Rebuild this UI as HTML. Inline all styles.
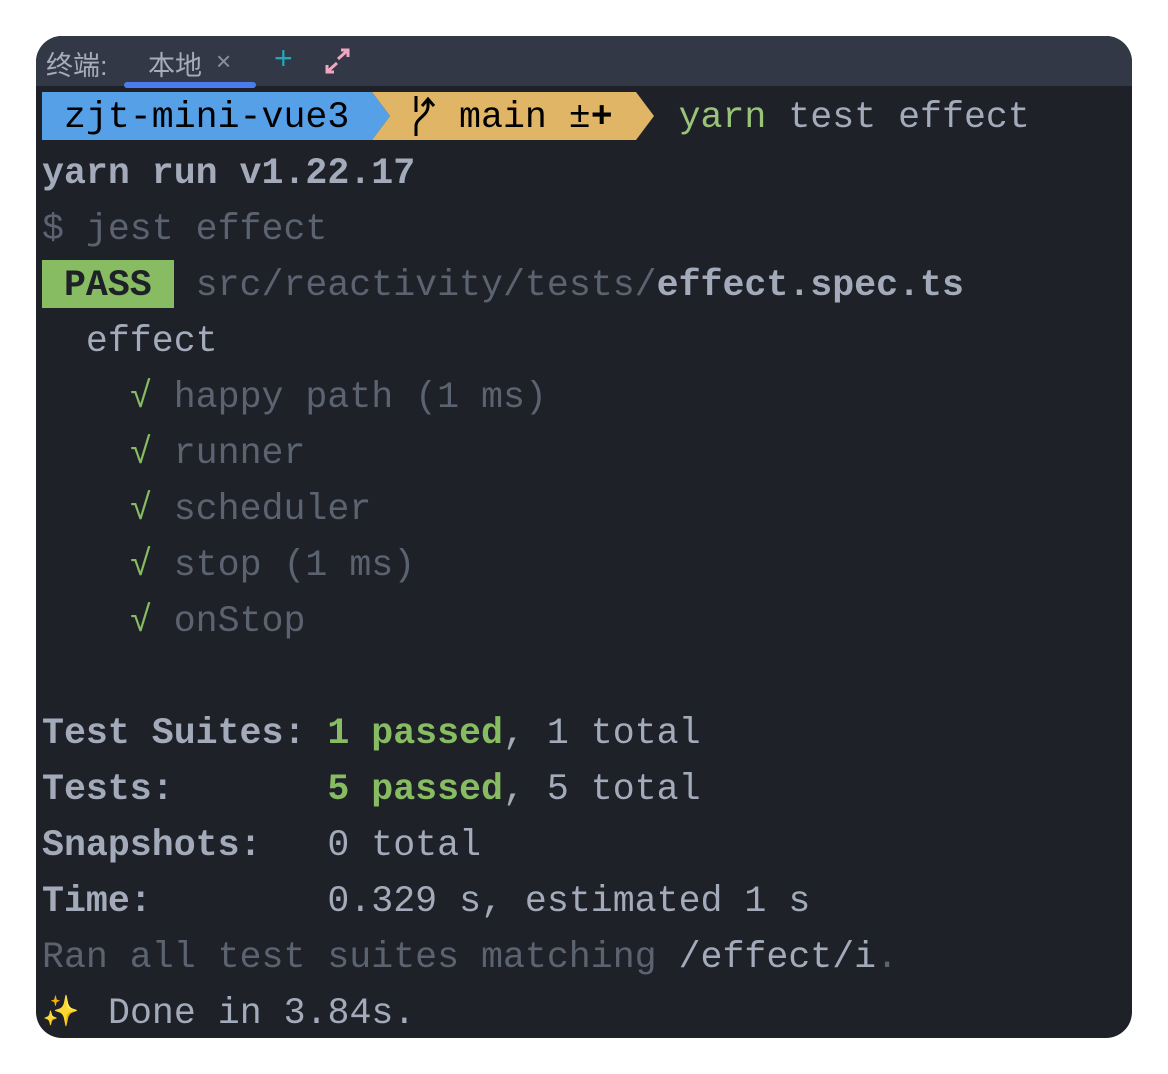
<!DOCTYPE html>
<html><head><meta charset="utf-8"><style>
body{margin:0;background:#fff;width:1168px;height:1074px;position:relative;overflow:hidden}
.win{position:absolute;left:36px;top:36px;width:1096px;height:1002px;border-radius:26px;background:#1f2129;overflow:hidden}
.hdr{position:absolute;left:0;top:0;width:1096px;height:50px;background:#323845}
.hdr span{position:absolute;font-family:"Liberation Sans","Noto Sans CJK SC",sans-serif;font-size:27px;color:#a6acb8;top:8px}
.ul{position:absolute;left:88px;top:46px;width:132px;height:6px;border-radius:3px;background:#4a7cf0}
.l{position:absolute;left:6px;white-space:pre;font-family:"Liberation Mono",monospace;font-size:36.6px;line-height:56px;height:56px;color:#a3abba}
.b{font-weight:bold}
.d{color:#5c6370}
.g{color:#87bc62}
.bar{position:absolute;top:56px;height:48px}
</style></head><body>
<div class="win">
<div class="hdr">
<span style="left:10px">终端:</span>
<span style="left:112px">本地</span>
<span style="left:180px;font-size:26px;top:10px;color:#8a909c">×</span>
<span style="left:238px;color:#22a6b8;font-size:32px;top:4px">+</span>
<svg style="position:absolute;left:288px;top:12px" width="28" height="26" viewBox="0 0 28 26"><g stroke="#f0a6c0" stroke-width="3" fill="none"><path d="M14 11L24 2M17 2H24V9"/><path d="M13 15L3 24M3 17V24H10"/></g></svg>
</div>
<div class="ul"></div>
<svg class="bar" style="left:6px" width="620" height="48"><polygon points="0,0 330,0 348,24 330,48 0,48" fill="#56a0e8"/><polygon points="330,0 594,0 612,24 594,48 330,48 348,24" fill="#e0b566"/>
<g stroke="#000" stroke-width="3" fill="none"><path d="M374 4V20M374 44V34C374 26 386 24 386 14V8M380 14L386 7L392 14"/></g></svg>
<div class="l" style="top:54px;color:#000"> zjt-mini-vue3     main ±<b>+</b>   <span style="color:#98c379">yarn</span><span style="color:#a3abba"> test effect</span></div>
<div class="l b" style="top:110px">yarn run v1.22.17</div>
<div class="l d" style="top:166px">$ jest effect</div>
<div style="position:absolute;left:6px;top:224px;width:132px;height:48px;background:#87bc62"></div>
<div class="l" style="top:222px"><span class="b" style="color:#1f2129"> PASS </span> <span class="d">src/reactivity/tests/</span><span class="b">effect.spec.ts</span></div>
<div class="l" style="top:278px">  effect</div>
<div class="l" style="top:334px">    <span class="g">√</span> <span class="d">happy path (1 ms)</span></div>
<div class="l" style="top:390px">    <span class="g">√</span> <span class="d">runner</span></div>
<div class="l" style="top:446px">    <span class="g">√</span> <span class="d">scheduler</span></div>
<div class="l" style="top:502px">    <span class="g">√</span> <span class="d">stop (1 ms)</span></div>
<div class="l" style="top:558px">    <span class="g">√</span> <span class="d">onStop</span></div>
<div class="l" style="top:670px"><b>Test Suites:</b> <b class="g">1 passed</b>, 1 total</div>
<div class="l" style="top:726px"><b>Tests:</b>       <b class="g">5 passed</b>, 5 total</div>
<div class="l" style="top:782px"><b>Snapshots:</b>   0 total</div>
<div class="l" style="top:838px"><b>Time:</b>        0.329 s, estimated 1 s</div>
<div class="l" style="top:894px"><span class="d">Ran all test suites matching </span>/effect/i<span class="d">.</span></div>
<div class="l" style="top:950px;color:#f5c842;font-size:30px">✨</div>
<div class="l" style="top:950px;left:72px">Done in 3.84s.</div>
</div>
</body></html>
